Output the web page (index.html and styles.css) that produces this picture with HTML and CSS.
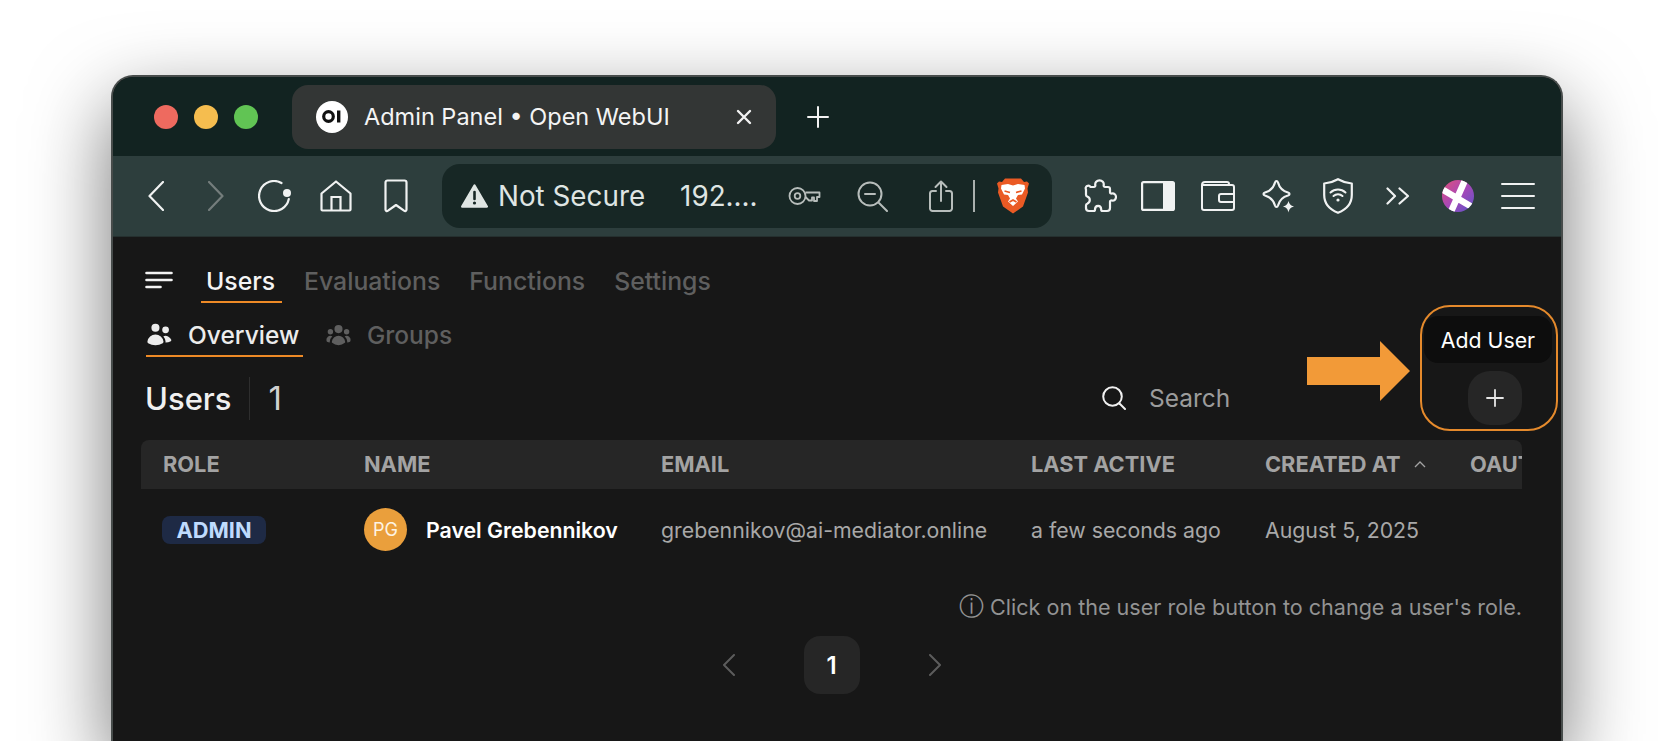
FILE: index.html
```html
<!DOCTYPE html>
<html lang="en">
<head>
    <meta charset="UTF-8">
    <meta name="viewport" content="width=device-width, initial-scale=1.0">
    <title>Admin Panel • Open WebUI</title>
    <link rel="stylesheet" href="styles.css">
</head>
<body>
    <div class="window">
        <div class="tabstrip">
            <div class="lights">
                <span class="light red"></span>
                <span class="light yellow"></span>
                <span class="light green"></span>
            </div>
            <div class="tab">
                <span class="tab-logo">
                    <svg width="20" height="13" viewBox="0 0 20 13"><circle cx="6.500" cy="6.500" r="4.800" fill="none" stroke="#111" stroke-width="3.200"/><rect x="15" y="0.500" width="3.400" height="12" fill="#111"/></svg>
                </span>
                <span class="tab-title">Admin Panel • Open WebUI</span>
                <svg class="tab-close" width="16" height="16" viewBox="0 0 16 16"><path d="M2 2l12 12M14 2L2 14" stroke="#f2f2f2" stroke-width="2.400" stroke-linecap="round"/></svg>
            </div>
            <svg class="new-tab" width="22" height="22" viewBox="0 0 22 22"><path d="M11 1v20M1 11h20" stroke="#f2f2f2" stroke-width="2" stroke-linecap="round"/></svg>
        </div>

        <div class="toolbar">
            <svg class="tool back" width="16" height="30" viewBox="0 0 16 30"><path d="M15 1L1.500 15 15 29" fill="none" stroke="#f0f2f2" stroke-width="2.200" stroke-linecap="round" stroke-linejoin="round"/></svg>
            <svg class="tool forward" width="16" height="30" viewBox="0 0 16 30"><path d="M1 1l13.500 14L1 29" fill="none" stroke="#747d7c" stroke-width="2.200" stroke-linecap="round" stroke-linejoin="round"/></svg>
            <svg class="tool reload" width="34" height="32" viewBox="0 0 34 32"><path d="M23.500 3A15 15 0 1 0 30.800 19" fill="none" stroke="#f0f2f2" stroke-width="2.200" stroke-linecap="round"/><circle cx="29" cy="13" r="4" fill="#f0f2f2"/></svg>
            <svg class="tool home" width="32" height="32" viewBox="0 0 32 32"><path d="M1.500 13.500L16 1.500l14.500 12v16a1 1 0 0 1-1 1h-27a1 1 0 0 1-1-1z" fill="none" stroke="#f0f2f2" stroke-width="2.200" stroke-linejoin="round"/><path d="M11.500 30V17h9v13" fill="none" stroke="#f0f2f2" stroke-width="2.200"/></svg>
            <svg class="tool bookmark" width="24" height="34" viewBox="0 0 24 34"><path d="M3.500 1.500h17a2 2 0 0 1 2 2v27c0 1.500-1.300 2-2.500 1.200L12 26 4 31.700c-1.200.8-2.500.3-2.500-1.200v-27a2 2 0 0 1 2-2z" fill="none" stroke="#f0f2f2" stroke-width="2.200" stroke-linejoin="round"/></svg>

            <div class="address">
                <svg class="warn" width="27" height="24" viewBox="0 0 27 24"><path d="M13.500 1.500L25.800 22.500H1.200z" fill="#dfe5e3" stroke="#dfe5e3" stroke-width="2.400" stroke-linejoin="round"/><path d="M13.500 8v7" stroke="#172725" stroke-width="2.600" stroke-linecap="round"/><circle cx="13.500" cy="19" r="1.600" fill="#172725"/></svg>
                <span class="not-secure">Not Secure</span>
                <span class="url">192....</span>
                <svg class="key" width="33" height="18" viewBox="0 0 33 18"><circle cx="9.500" cy="9" r="8" fill="none" stroke="#b7bdbb" stroke-width="1.800"/><circle cx="9.500" cy="9" r="2.800" fill="none" stroke="#b7bdbb" stroke-width="1.800"/><path d="M17.500 5.500h14v4.500h-2.500v4h-3v-3.500h-2v3h-3l-3.500-3.500" fill="none" stroke="#b7bdbb" stroke-width="1.800" stroke-linejoin="round"/></svg>
                <svg class="zoom-out" width="31" height="31" viewBox="0 0 31 31"><circle cx="13" cy="13" r="11.500" fill="none" stroke="#b7bdbb" stroke-width="2"/><path d="M8 13h10M22 22l8 8" stroke="#b7bdbb" stroke-width="2" stroke-linecap="round"/></svg>
                <svg class="share" width="24" height="33" viewBox="0 0 24 33"><path d="M12 21V2M6.500 7L12 1.500 17.500 7" fill="none" stroke="#b7bdbb" stroke-width="2" stroke-linecap="round" stroke-linejoin="round"/><path d="M7 11H3.500a2.500 2.500 0 0 0-2.500 2.500v15A2.500 2.500 0 0 0 3.500 31h17a2.500 2.500 0 0 0 2.500-2.500v-15a2.500 2.500 0 0 0-2.500-2.500H17" fill="none" stroke="#b7bdbb" stroke-width="2" stroke-linecap="round"/></svg>
                <span class="addr-divider"></span>
                <svg class="lion" width="32" height="36" viewBox="0 0 32 36"><path d="M8 0.500h16l3 3.500 3-.5 2 2-1.500 5 .5 4-5 14-10 7-10-7-5-14 .5-4L0 5.500l2-2 3 .5z" fill="#ea5a24"/><path d="M16 7.500l5-1.500 6.500 1 .5 3.500-3 6-4 .5-2 3.500 2 3-5 4.500-5-4.500 2-3-2-3.500-4-.5-3-6 .5-3.500L11 6z" fill="#fff"/><path d="M7.500 13l5.500 1.500M24.500 13L19 14.500M12.500 24l3.500-2 3.500 2" stroke="#ea5a24" stroke-width="1.800" fill="none"/></svg>
            </div>

            <svg class="tool puzzle" width="34" height="34" viewBox="0 0 34 34"><path d="M7.500 8h3.300c1.200 0 1.700-1 1.500-2-.5-2.600 1.500-4.700 4.200-4.700 2.700 0 4.700 2.100 4.200 4.700-.2 1 .3 2 1.500 2h2.800a2 2 0 0 1 2 2v3.200c0 1 1 1.500 1.800 1.300 2.400-.5 4.200 1.300 4.200 3.500 0 2.300-1.800 4-4.200 3.500-.8-.2-1.800.3-1.800 1.300V29a3 3 0 0 1-3 3h-4.500c-1 0-1.300-.7-1.300-1.500 0-2.500-1.400-3.700-3.100-3.700-1.800 0-3.100 1.200-3.100 3.700 0 .8-.4 1.500-1.300 1.500H6a3 3 0 0 1-3-3v-2.600c0-.9.500-1.400 1.200-1.700 1.700-.8 2.600-2.100 2.600-3.700 0-1.700-1-2.800-2.600-3.500-.7-.3-1.200-.9-1.200-1.700V10.500A2.500 2.500 0 0 1 7.500 8z" fill="none" stroke="#f0f2f2" stroke-width="2.200" stroke-linejoin="round"/></svg>
            <svg class="tool sidebar" width="34" height="30" viewBox="0 0 34 30"><rect x="1.100" y="1.100" width="31.800" height="27.800" rx="1.500" fill="none" stroke="#f0f2f2" stroke-width="2.200"/><rect x="22" y="1" width="11" height="28" rx="1" fill="#f0f2f2"/></svg>
            <svg class="tool wallet" width="34" height="30" viewBox="0 0 34 30"><path d="M28 4V3a2 2 0 0 0-2-2H4a3 3 0 0 0-3 3v23a2 2 0 0 0 2 2h28a2 2 0 0 0 2-2V6a2 2 0 0 0-2-2H1" fill="none" stroke="#f0f2f2" stroke-width="2"/><path d="M33 13H20a2 2 0 0 0-2 2v4a2 2 0 0 0 2 2h13" fill="none" stroke="#f0f2f2" stroke-width="2"/></svg>
            <svg class="tool stars" width="34" height="34" viewBox="0 0 34 34"><path d="M15.500 2c.8 0 1.200.6 1.500 1.500C18.500 9 21.500 12 27 13.500c.9.300 1.500.7 1.500 1.500s-.6 1.200-1.500 1.500C21.500 18 18.500 21 17 26.500c-.3.900-.7 1.500-1.500 1.500s-1.200-.6-1.500-1.500C12.500 21 9.500 18 4 16.500c-.9-.3-1.500-.7-1.500-1.500s.6-1.200 1.500-1.500C9.500 12 12.500 9 14 3.500c.3-.9.700-1.500 1.500-1.500z" fill="none" stroke="#f0f2f2" stroke-width="2.200"/><path d="M27.500 22c.8 3 2 4.500 5.500 5.500-3.500 1-4.700 2.500-5.500 6-.8-3.500-2-5-5.500-6 3.500-1 4.700-2.500 5.500-5.500z" fill="#f0f2f2"/></svg>
            <svg class="tool shield" width="30" height="36" viewBox="0 0 30 36"><path d="M15 1.200C19 3.500 24 5 28.800 5.500V17c0 8.500-5.500 14.500-13.800 17.800C6.700 31.500 1.200 25.500 1.200 17V5.500C6 5 11 3.500 15 1.200z" fill="none" stroke="#f0f2f2" stroke-width="2.200" stroke-linejoin="round"/><path d="M7.500 14.500a11 11 0 0 1 15 0M10.500 18a6.500 6.500 0 0 1 9 0" fill="none" stroke="#f0f2f2" stroke-width="2" stroke-linecap="round"/><circle cx="15" cy="22" r="1.600" fill="#f0f2f2"/></svg>
            <svg class="tool more" width="24" height="18" viewBox="0 0 24 18"><path d="M1.500 1.500L9 9l-7.500 7.500M13.500 1.500L22 9l-8.500 7.500" fill="none" stroke="#f0f2f2" stroke-width="2.200" stroke-linecap="round" stroke-linejoin="round"/></svg>
            <svg class="tool profile" width="32" height="32" viewBox="0 0 32 32">
                <defs>
                    <linearGradient id="profile-fill" x1="0" y1="0" x2="1" y2="1"><stop offset="0" stop-color="#e0517a"/><stop offset="0.500" stop-color="#a747b8"/><stop offset="1" stop-color="#5a55c8"/></linearGradient>
                    <clipPath id="profile-clip"><circle cx="16" cy="16" r="16"/></clipPath>
                </defs>
                <circle cx="16" cy="16" r="16" fill="url(#profile-fill)"/>
                <g clip-path="url(#profile-clip)"><path d="M-2 8L30 27M24 -2L8 34" stroke="#fff" stroke-width="6.500"/></g>
            </svg>
            <svg class="tool hamburger" width="34" height="28" viewBox="0 0 34 28"><path d="M1 2h32M1 14h32M1 26h32" stroke="#f0f2f2" stroke-width="2" stroke-linecap="round"/></svg>
        </div>

        <main class="content">
            <nav class="topnav">
                <svg class="menu-icon" width="28" height="18" viewBox="0 0 28 18"><path d="M1.500 2h25M1.500 9h25M1.500 16h14" stroke="#f2f2f2" stroke-width="2.600" stroke-linecap="round"/></svg>
                <a class="topnav-item active">Users</a>
                <a class="topnav-item">Evaluations</a>
                <a class="topnav-item">Functions</a>
                <a class="topnav-item">Settings</a>
            </nav>

            <nav class="subnav">
                <a class="subnav-item active">
                    <svg width="27" height="27" viewBox="0 0 20 20" fill="currentColor"><path d="M7 8a3 3 0 1 0 0-6 3 3 0 0 0 0 6ZM14.500 9a2.500 2.500 0 1 0 0-5 2.500 2.500 0 0 0 0 5ZM1.615 16.428a1.224 1.224 0 0 1-.569-1.175 6.002 6.002 0 0 1 11.908 0c.058.467-.172.92-.57 1.174A9.953 9.953 0 0 1 7 18a9.953 9.953 0 0 1-5.385-1.572ZM14.500 16h-.106c.07-.297.088-.611.048-.933a7.470 7.470 0 0 0-1.588-3.755 4.502 4.502 0 0 1 5.874 2.636.818.818 0 0 1-.36.98A7.465 7.465 0 0 1 14.500 16Z"/></svg>
                    Overview
                </a>
                <a class="subnav-item">
                    <svg width="27" height="27" viewBox="0 0 20 20" fill="currentColor"><path d="M10 9a3 3 0 1 0 0-6 3 3 0 0 0 0 6ZM6 8a2 2 0 1 1-4 0 2 2 0 0 1 4 0ZM1.490 15.326a.78.78 0 0 1-.358-.442 3 3 0 0 1 4.308-3.516 6.484 6.484 0 0 0-1.905 3.959c-.023.222-.014.442.025.654a4.970 4.970 0 0 1-2.070-.655ZM16.440 15.980a4.970 4.970 0 0 0 2.070-.654.78.78 0 0 0 .357-.442 3 3 0 0 0-4.308-3.517 6.484 6.484 0 0 1 1.907 3.960 2.320 2.320 0 0 1-.026.654ZM18 8a2 2 0 1 1-4 0 2 2 0 0 1 4 0ZM5.304 16.190a.844.844 0 0 1-.277-.71 5 5 0 0 1 9.947 0 .843.843 0 0 1-.277.71A6.975 6.975 0 0 1 10 18a6.974 6.974 0 0 1-4.696-1.810Z"/></svg>
                    Groups
                </a>
            </nav>

            <div class="heading-row">
                <h2 class="heading">Users</h2>
                <span class="heading-divider"></span>
                <span class="heading-count">1</span>
                <div class="search">
                    <svg width="24" height="24" viewBox="0 0 24 24"><circle cx="10.500" cy="10.500" r="9.300" fill="none" stroke="#f0f0f0" stroke-width="2"/><path d="M17.500 17.500L23 23" stroke="#f0f0f0" stroke-width="2" stroke-linecap="round"/></svg>
                    <span class="search-text">Search</span>
                </div>
                <button class="add-btn">
                    <svg width="18" height="18" viewBox="0 0 18 18"><path d="M9 1v16M1 9h16" stroke="#e6e6e6" stroke-width="1.800" stroke-linecap="round"/></svg>
                </button>
            </div>

            <div class="table-wrap">
                <table class="users">
                    <colgroup>
                        <col class="col-role"><col class="col-name"><col class="col-email"><col class="col-active"><col class="col-created"><col class="col-oauth">
                    </colgroup>
                    <thead>
                        <tr>
                            <th>Role</th>
                            <th>Name</th>
                            <th>Email</th>
                            <th>Last Active</th>
                            <th>Created at
                                <svg class="sort" width="12" height="7" viewBox="0 0 12 7"><path d="M1 6l5-5 5 5" fill="none" stroke="#a3a3a3" stroke-width="1.300"/></svg>
                            </th>
                            <th>OAuth ID</th>
                        </tr>
                    </thead>
                    <tbody>
                        <tr>
                            <td><span class="role-badge">ADMIN</span></td>
                            <td>
                                <div class="user-cell">
                                    <span class="avatar">PG</span>
                                    <span class="user-name">Pavel Grebennikov</span>
                                </div>
                            </td>
                            <td>grebennikov@ai-mediator.online</td>
                            <td>a few seconds ago</td>
                            <td>August 5, 2025</td>
                            <td></td>
                        </tr>
                    </tbody>
                </table>
            </div>

            <p class="hint"><span class="hint-icon">ⓘ</span> Click on the user role button to change a user's role.</p>

            <div class="pager">
                <svg width="14" height="22" viewBox="0 0 14 22"><path d="M12 1L2 11l10 10" fill="none" stroke="#5c5c5c" stroke-width="2" stroke-linecap="round" stroke-linejoin="round"/></svg>
                <span class="page-num">1</span>
                <svg width="14" height="22" viewBox="0 0 14 22"><path d="M2 1l10 10L2 21" fill="none" stroke="#5c5c5c" stroke-width="2" stroke-linecap="round" stroke-linejoin="round"/></svg>
            </div>

            <!-- annotation drawn over the page -->
            <div class="tooltip">Add User</div>
            <div class="callout"></div>
            <svg class="arrow" width="103" height="60" viewBox="0 0 103 60"><path d="M0 16h73V0l30 30-30 30V44H0z" fill="#f29a38"/></svg>
        </main>
    </div>
</body>
</html>
```

FILE: styles.css
```css
* {
    box-sizing: border-box;
}

html, body {
    height: 741px;
    overflow: hidden;
}

body {
    margin: 0;
    background: #fff;
    font-family: Inter, "Noto Sans", sans-serif;
}

.window {
    width: 1452px;
    height: 666px;
    margin: 75px 0 0 111px;
    border: 2px solid #474c4b;
    border-bottom: none;
    border-radius: 22px 22px 0 0;
    overflow: hidden;
    background: #171717;
    box-shadow: 0 30px 80px rgba(0, 0, 0, 0.55);
}

/* tab strip */
.tabstrip {
    height: 79px;
    background: #122321;
    display: flex;
    align-items: center;
    padding-left: 41px;
}

.lights {
    display: flex;
    gap: 16px;
}

.light {
    width: 24px;
    height: 24px;
    border-radius: 50%;
}

.red { background: #ee6a5f; }
.yellow { background: #f5bd4f; }
.green { background: #61c454; }

.tab {
    width: 484px;
    height: 64px;
    margin-left: 34px;
    padding: 0 24px;
    background: #333635;
    border-radius: 16px;
    display: flex;
    align-items: center;
    color: #f4f4f4;
}

.tab-logo {
    width: 32px;
    height: 32px;
    border-radius: 50%;
    background: #fff;
    display: flex;
    align-items: center;
    justify-content: center;
}

.tab-title {
    margin-left: 16px;
    font-size: 23.500px;
}

.tab-close {
    margin-left: auto;
}

.new-tab {
    margin-left: 31px;
}

/* toolbar */
.toolbar {
    height: 81px;
    background: #2d3e3d;
    border-bottom: 1px solid #25302f;
    display: flex;
    align-items: center;
    padding-left: 35px;
}

.toolbar svg {
    flex: none;
}

.forward { margin-left: 44px; }
.reload { margin-left: 34px; }
.home { margin-left: 28px; }
.bookmark { margin-left: 32px; }

.address {
    width: 610px;
    height: 64px;
    margin-left: 34px;
    background: #172725;
    border-radius: 18px;
    display: flex;
    align-items: center;
    padding-left: 19px;
    color: #dfe5e3;
    font-size: 27.800px;
}

.not-secure {
    margin-left: 10px;
}

.url {
    margin-left: 35px;
}

.key { margin-left: 30px; }
.zoom-out { margin-left: 36px; }
.share { margin-left: 41px; }

.addr-divider {
    width: 2px;
    height: 32px;
    margin-left: 20px;
    background: #a9b0ae;
}

.lion {
    margin-left: 22px;
}

.puzzle { margin-left: 31px; }
.sidebar { margin-left: 24px; }
.wallet { margin-left: 26px; }
.stars { margin-left: 26px; }
.shield { margin-left: 28px; }
.more { margin-left: 33px; }
.profile { margin-left: 32px; }
.hamburger { margin-left: 27px; }

/* page */
.content {
    position: relative;
    padding: 0 38px 0 28px;
    color: #f0f0f0;
}

.topnav {
    height: 66px;
    display: flex;
    align-items: flex-end;
    font-size: 24.800px;
    font-weight: 500;
}

.menu-icon {
    align-self: flex-end;
    margin: 0 0 14px 4px;
}

.topnav-item {
    height: 48px;
    padding: 11px 0 0;
    margin-left: 29px;
    color: #5f5f5f;
}

.topnav-item.active {
    width: 81px;
    margin-left: 28px;
    padding-left: 5px;
    color: #f4f4f4;
    border-bottom: 2px solid #ee8a26;
}

.topnav-item.active + .topnav-item {
    margin-left: 22px;
}

.subnav {
    height: 54px;
    display: flex;
    align-items: flex-end;
    padding-left: 5px;
    font-size: 24.500px;
    font-weight: 500;
}

.subnav-item {
    height: 46px;
    padding-top: 9px;
    display: flex;
    align-items: flex-start;
    gap: 15px;
    color: #5f5f5f;
}

.subnav-item svg {
    margin-top: 1px;
}

.subnav-item.active {
    width: 157px;
    margin-right: 22px;
    color: #ececec;
    border-bottom: 2px solid #ee8a26;
}

.heading-row {
    height: 54px;
    margin-top: 14px;
    display: flex;
    align-items: center;
    padding-left: 4px;
}

.heading {
    margin: 0;
    font-size: 31px;
    font-weight: 500;
}

.heading-divider {
    width: 1px;
    height: 43px;
    margin-left: 17px;
    background: #2e2e2e;
}

.heading-count {
    margin-left: 19px;
    font-size: 33px;
    font-weight: 400;
    color: #d0d0d0;
}

.search {
    margin-left: auto;
    width: 366px;
    display: flex;
    align-items: center;
    gap: 23px;
}

.search-text {
    font-size: 24.500px;
    color: #9c9c9c;
}

.add-btn {
    width: 54px;
    height: 54px;
    margin-right: 1px;
    border: none;
    border-radius: 22px;
    background: #262626;
    display: flex;
    align-items: center;
    justify-content: center;
}

/* table */
.table-wrap {
    margin-top: 15px;
    overflow: hidden;
}

.users {
    width: 1381px;
    table-layout: fixed;
    border-collapse: collapse;
    font-size: 21.300px;
}

.col-role { width: 201px; }
.col-name { width: 297px; }
.col-email { width: 370px; }
.col-active { width: 234px; }
.col-created { width: 205px; }
.col-oauth { width: 74px; }

.users th {
    height: 49px;
    padding: 0 0 2px 22px;
    background: #262626;
    color: #a3a3a3;
    font-size: 21.800px;
    font-weight: 700;
    text-align: left;
    text-transform: uppercase;
    white-space: nowrap;
    overflow: hidden;
}

.users th:first-child {
    border-top-left-radius: 8px;
}

.users th:last-child {
    border-top-right-radius: 8px;
}

.sort {
    margin: 0 0 4px 8px;
}

.users td {
    height: 82px;
    padding: 0 0 1px 22px;
    color: #a8a8a8;
    white-space: nowrap;
}

.role-badge {
    display: inline-block;
    width: 104px;
    margin-left: -1px;
    padding: 1px 0;
    border-radius: 8px;
    background: #1e2a45;
    color: #bfdbfe;
    font-size: 21.800px;
    font-weight: 700;
    text-align: center;
}

.user-cell {
    display: flex;
    align-items: center;
    gap: 19px;
}

.avatar {
    width: 43px;
    height: 43px;
    border-radius: 50%;
    background: #ea9f3c;
    color: #fdf3e3;
    font-size: 18px;
    display: flex;
    align-items: center;
    justify-content: center;
}

.user-name {
    color: #fff;
    font-weight: 600;
}

.hint {
    margin: 21px 1px 0 0;
    font-size: 21.560px;
    line-height: 30px;
    color: #939393;
    text-align: right;
}

.hint-icon {
    font-size: 25px;
    line-height: 20px;
}

.pager {
    margin-top: 14px;
    display: flex;
    align-items: center;
    justify-content: center;
    gap: 68px;
    padding-right: 1px;
}

.page-num {
    width: 56px;
    height: 58px;
    border-radius: 16px;
    background: #262626;
    color: #fff;
    font-size: 24px;
    font-weight: 600;
    display: flex;
    align-items: center;
    justify-content: center;
}

/* annotation */
.tooltip {
    position: absolute;
    left: 1311px;
    top: 79px;
    width: 128px;
    height: 47px;
    border-radius: 14px;
    background: #0d0d0d;
    color: #fff;
    font-size: 21.300px;
    font-weight: 400;
    display: flex;
    align-items: center;
    justify-content: center;
}

.callout {
    position: absolute;
    left: 1307px;
    top: 68px;
    width: 138px;
    height: 126px;
    border: 2.500px solid #e58a2c;
    border-radius: 30px;
}

.arrow {
    position: absolute;
    left: 1194px;
    top: 104px;
}
```
